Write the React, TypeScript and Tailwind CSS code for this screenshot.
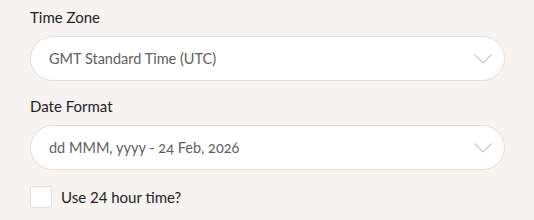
import { useState } from 'react';

function Chevron() {
  return (
    <svg width="20" height="11" viewBox="0 0 20 11" fill="none" className="shrink-0">
      <path d="M1.5 1.5l8.5 8.5 8.5-8.5" stroke="#cbc8c5" strokeWidth="1.1" />
    </svg>
  );
}

function SelectBox({ label, value }: { label: string; value: string }) {
  return (
    <div>
      <div className="text-[15px] leading-5 text-[#222] mb-[9px]">{label}</div>
      <div className="h-[45px] rounded-full bg-white border border-[#e2dfdb] flex items-center justify-between pl-[18px] pr-[11px]">
        <span className="text-[14.5px] text-[#606060] oldstyle-nums">{value}</span>
        <Chevron />
      </div>
    </div>
  );
}

export default function App() {
  const [use24, setUse24] = useState(false);

  return (
    <div className="w-[534px] h-[220px] bg-[#f6f3f0] pt-[7px] pl-[30px] font-['Lato',sans-serif]">
      <div className="w-[475px] flex flex-col">
        <SelectBox label="Time Zone" value="GMT Standard Time (UTC)" />
        <div className="mt-[15px]">
          <SelectBox label="Date Format" value="dd MMM, yyyy - 24 Feb, 2026" />
        </div>
        <label className="mt-[16px] flex items-center gap-[9px] cursor-pointer">
          <button
            onClick={() => setUse24(!use24)}
            className="w-[22px] h-[22px] bg-white border border-[#e2dfdb] rounded-[2px]"
          />
          <span className="text-[15px] text-[#222]">Use 24 hour time?</span>
        </label>
      </div>
    </div>
  );
}
